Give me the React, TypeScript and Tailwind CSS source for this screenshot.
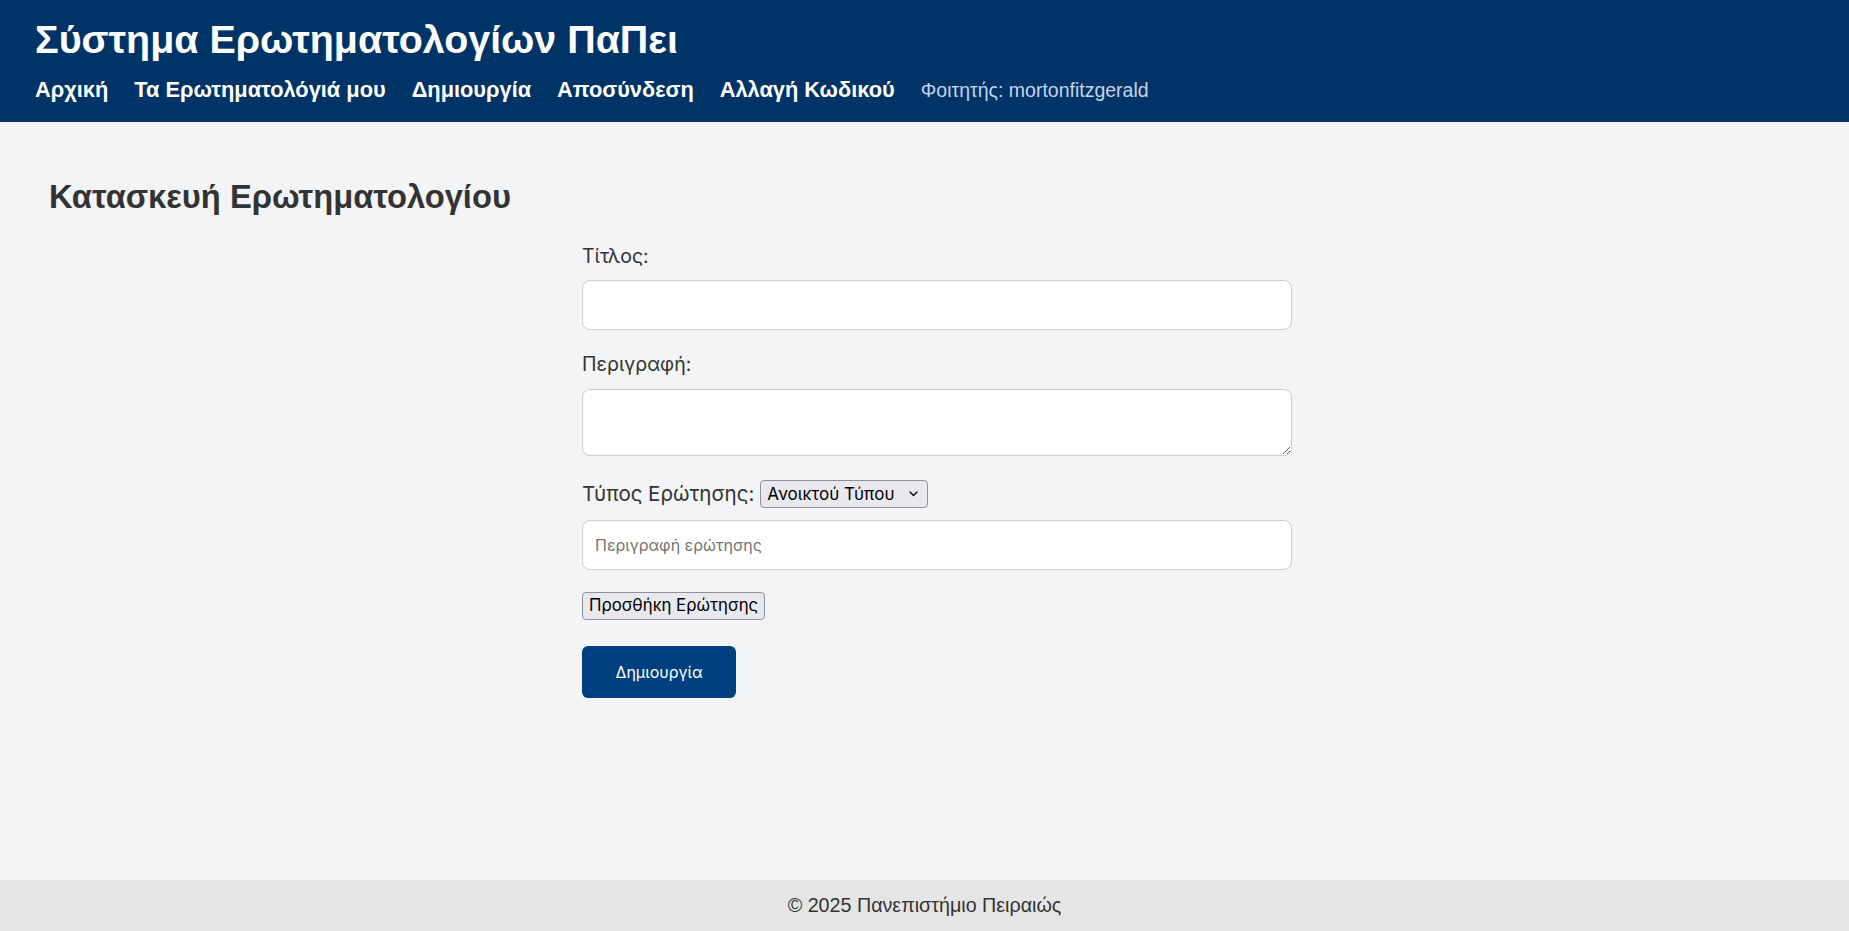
import { useState } from "react";

const navLinks = ["Αρχική", "Τα Ερωτηματολόγιά μου", "Δημιουργία", "Αποσύνδεση", "Αλλαγή Κωδικού"];

const Header = () => {
    return (
        <header className="bg-[#003366] px-[35px] pt-[17px] pb-[20px] font-['Liberation_Sans',Arial,sans-serif]">
            <h1 className="text-[39.4px] leading-[44px] font-bold text-white">Σύστημα Ερωτηματολογίων ΠαΠει</h1>
            <nav className="mt-[17px] flex items-baseline gap-[26px]">
                {navLinks.map((link) => (
                    <a key={link} href="#" className="text-[21.8px] leading-[24px] font-bold text-white">
                        {link}
                    </a>
                ))}
                <span className="text-[19.5px] leading-[24px] text-[#c5d3ee]">Φοιτητής: mortonfitzgerald</span>
            </nav>
        </header>
    );
};

const fieldClass = "block w-full bg-white border border-[#cccccc] rounded-[8px] px-3 text-[16px] text-[#333] outline-none";

export default function App() {
    const [type, setType] = useState("open");

    return (
        <div className="min-h-screen flex flex-col bg-gray-100">
            <Header />

            <main className="flex-1 px-[49px] pt-[57px]">
                <h2 className="text-[32.7px] leading-[36px] font-bold text-[#333] font-['Liberation_Sans',Arial,sans-serif]">
                    Κατασκευή Ερωτηματολογίου
                </h2>

                <form className="mx-auto w-[735px] pl-[25px] mt-[29px] font-['Inter','Noto_Sans',sans-serif] text-[#333]">
                    <label className="block text-[19.5px] leading-[24px] mb-[12px]">Τίτλος:</label>
                    <input type="text" className={fieldClass + " h-[50px] mb-[22px]"} />

                    <label className="block text-[19.5px] leading-[24px] mb-[13px]">Περιγραφή:</label>
                    <textarea className={fieldClass + " h-[67px] py-2 mb-[24px] resize-y"} />

                    <div className="flex items-center gap-[6px] mb-[12px]">
                        <span className="text-[20.5px] leading-[28px]">Τύπος Ερώτησης:</span>
                        <div className="relative">
                            <select
                                value={type}
                                onChange={(e) => setType(e.target.value)}
                                className="appearance-none h-[28px] w-[168px] pl-[6px] pr-6 bg-[#e9e9ed] border border-[#8f8f9d] rounded-[4px] text-[17px] leading-[26px] text-black"
                            >
                                <option value="open">Ανοικτού Τύπου</option>
                                <option value="multiple">Πολλαπλής Επιλογής</option>
                            </select>
                            <svg className="absolute right-[10px] top-[11px] pointer-events-none" width="9" height="6" viewBox="0 0 9 6" fill="none">
                                <path d="M1 1L4.5 4.5L8 1" stroke="#000" strokeWidth="1.3" strokeLinecap="round" strokeLinejoin="round" />
                            </svg>
                        </div>
                    </div>

                    <input type="text" placeholder="Περιγραφή ερώτησης" className={fieldClass + " text-[16.5px] h-[50px] placeholder:text-[#757575] mb-[22px]"} />

                    <button type="button" className="block h-[28px] px-[6px] bg-[#e9e9ed] border border-[#8f8f9d] rounded-[4px] text-[16.8px] text-black mb-[26px]">
                        Προσθήκη Ερώτησης
                    </button>

                    <button type="submit" className="block h-[52px] w-[154px] bg-[#003f7f] rounded-[6px] text-white text-[16px]">
                        Δημιουργία
                    </button>
                </form>
            </main>

            <footer className="h-[51px] bg-[#e5e5e5] flex items-center justify-center text-[19.7px] text-[#333] font-['Liberation_Sans',Arial,sans-serif]">
                © 2025 Πανεπιστήμιο Πειραιώς
            </footer>
        </div>
    );
}
